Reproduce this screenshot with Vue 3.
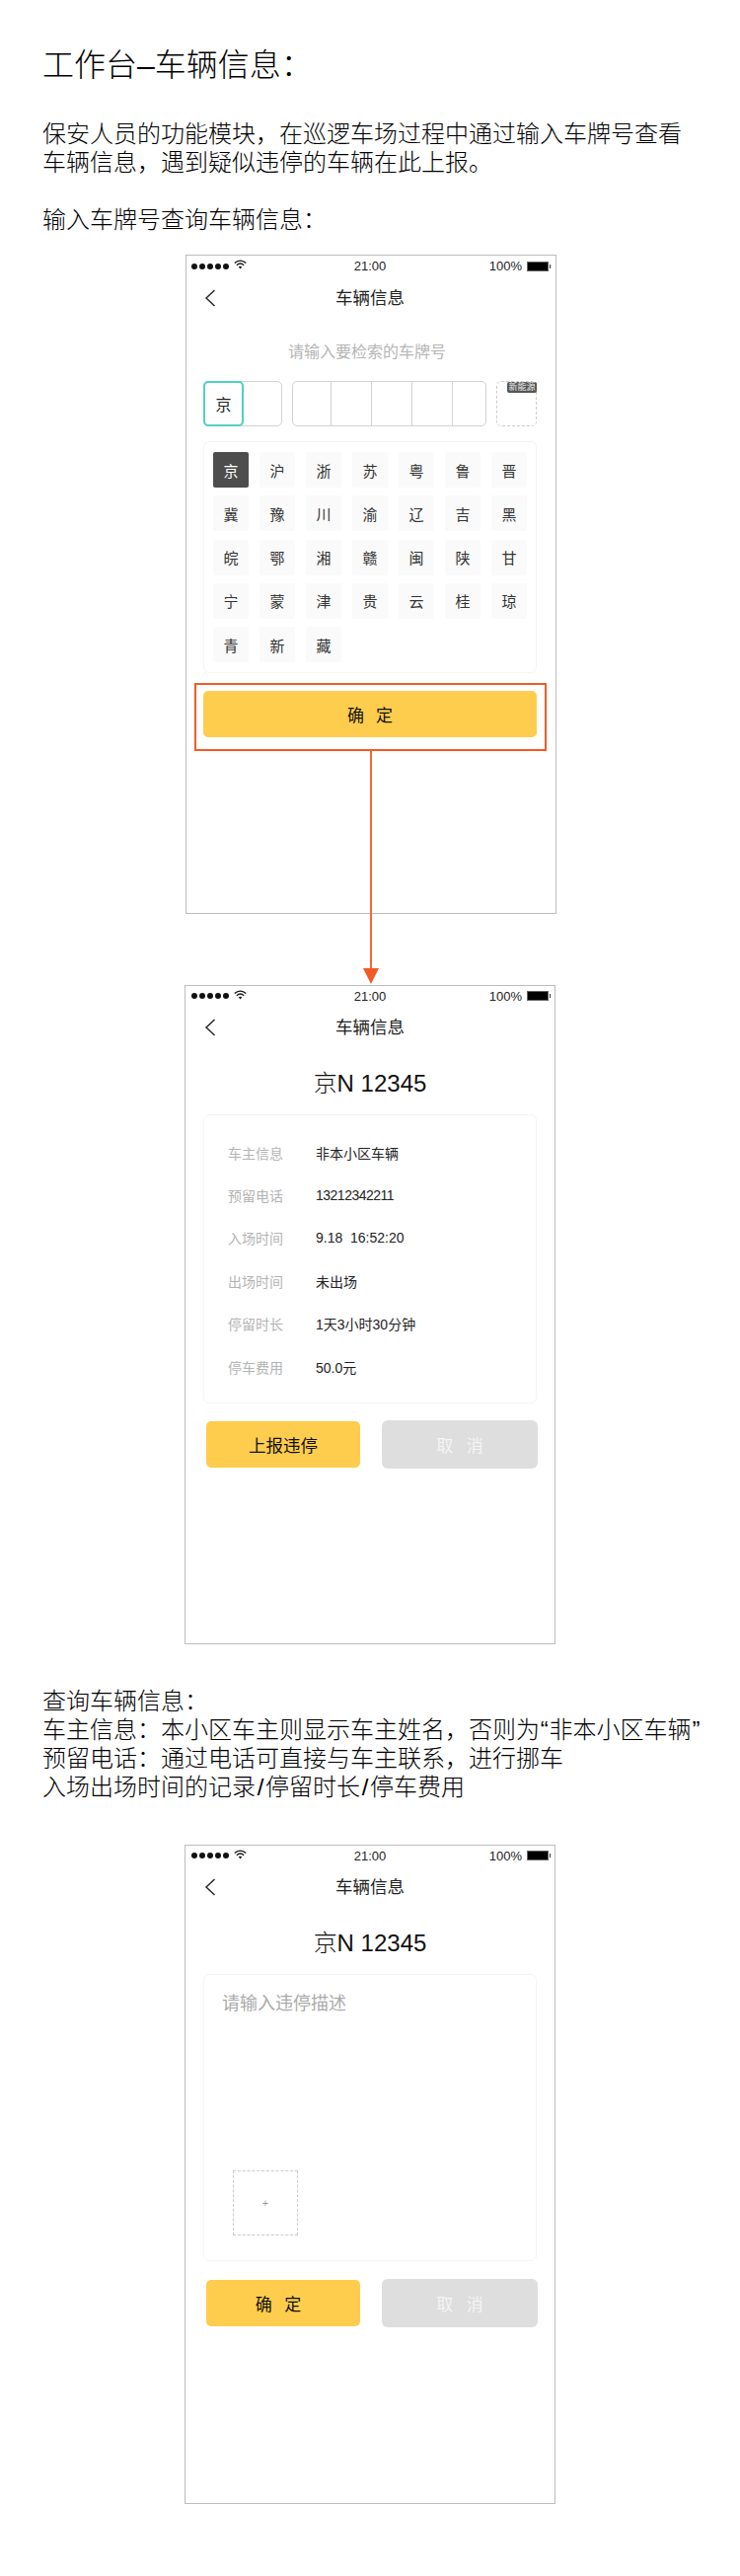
<script setup>
const provinces = ['京','沪','浙','苏','粤','鲁','晋','冀','豫','川','渝','辽','吉','黑','皖','鄂','湘','赣','闽','陕','甘','宁','蒙','津','贵','云','桂','琼','青','新','藏']
const details = [
  ['车主信息','非本小区车辆'],
  ['预留电话','13212342211'],
  ['入场时间','9.18  16:52:20'],
  ['出场时间','未出场'],
  ['停留时长','1天3小时30分钟'],
  ['停车费用','50.0元'],
]
const dots = [1,2,3,4,5]
</script>

<template>
  <div class="page">
    <h1 class="title">工作台–车辆信息：</h1>
    <p class="intro">保安人员的功能模块，在巡逻车场过程中通过输入车牌号查看<br>车辆信息，遇到疑似违停的车辆在此上报。</p>
    <h2 class="sub">输入车牌号查询车辆信息：</h2>

    <!-- screen 1 -->
    <section class="phone phone-a">
      <div class="status">
        <div class="signal">
          <i v-for="d in dots" :key="d" class="dot"></i>
          <svg class="wifi" width="13" height="10" viewBox="0 0 13 10"><path d="M.8 3.500C4.200.4 8.800.4 12.200 3.500M2.900 5.700c2.200-2 5-2 7.200 0" fill="none" stroke="#111" stroke-width="1.500"/><path d="M4.700 7.300c1.100-.9 2.500-.9 3.600 0L6.500 9.500z" fill="#111"/></svg>
        </div>
        <span class="time">21:00</span>
        <div class="power">
          <span>100%</span>
          <span class="battery"><i></i></span>
        </div>
      </div>
      <div class="nav">
        <svg class="back" width="12" height="18" viewBox="0 0 12 18"><path d="M10.500 1 2 9l8.500 8" fill="none" stroke="#222" stroke-width="1.400"/></svg>
        <span>车辆信息</span>
      </div>
      <p class="prompt">请输入要检索的车牌号</p>
      <div class="plate-row">
        <div class="plate-prov">
          <div class="plate-selected">京</div>
        </div>
        <div class="plate-cells">
          <i></i><i></i><i></i><i></i><i></i>
        </div>
        <div class="plate-new"><span class="badge">新能源</span></div>
      </div>
      <div class="keyboard">
        <span v-for="(p, i) in provinces" :key="p" class="key" :class="{ active: i === 0 }">{{ p }}</span>
      </div>
      <button class="primary wide">确&nbsp;&nbsp;定</button>

      <div class="highlight"></div>
      <div class="connector"></div>
    </section>

    <!-- screen 2 -->
    <section class="phone phone-b second">
      <div class="status">
        <div class="signal">
          <i v-for="d in dots" :key="d" class="dot"></i>
          <svg class="wifi" width="13" height="10" viewBox="0 0 13 10"><path d="M.8 3.500C4.200.4 8.800.4 12.200 3.500M2.900 5.700c2.200-2 5-2 7.200 0" fill="none" stroke="#111" stroke-width="1.500"/><path d="M4.700 7.300c1.100-.9 2.500-.9 3.600 0L6.500 9.500z" fill="#111"/></svg>
        </div>
        <span class="time">21:00</span>
        <div class="power">
          <span>100%</span>
          <span class="battery"><i></i></span>
        </div>
      </div>
      <div class="nav">
        <svg class="back" width="12" height="18" viewBox="0 0 12 18"><path d="M10.500 1 2 9l8.500 8" fill="none" stroke="#222" stroke-width="1.400"/></svg>
        <span>车辆信息</span>
      </div>
      <div class="plate-no">京N 12345</div>
      <div class="card info">
        <div v-for="(row, i) in details" :key="row[0]" class="info-row">
          <span class="info-label">{{ row[0] }}</span>
          <span class="info-value" :class="{ tight: i === 1 }">{{ row[1] }}</span>
        </div>
      </div>
      <div class="actions first">
        <button class="primary half">上报违停</button>
        <button class="muted">取&nbsp;&nbsp;消</button>
      </div>
    </section>

    <div class="notes">
      查询车辆信息：<br>
      车主信息：本小区车主则显示车主姓名，否则为<span class="quote">“</span>非本小区车辆<span class="quote">”</span><br>
      预留电话：通过电话可直接与车主联系，进行挪车<br>
      入场出场时间的记录<span class="slash">/</span>停留时长<span class="slash">/</span>停车费用
    </div>

    <!-- screen 3 -->
    <section class="phone phone-b third">
      <div class="status">
        <div class="signal">
          <i v-for="d in dots" :key="d" class="dot"></i>
          <svg class="wifi" width="13" height="10" viewBox="0 0 13 10"><path d="M.8 3.500C4.200.4 8.800.4 12.200 3.500M2.900 5.700c2.200-2 5-2 7.200 0" fill="none" stroke="#111" stroke-width="1.500"/><path d="M4.700 7.300c1.100-.9 2.500-.9 3.600 0L6.500 9.500z" fill="#111"/></svg>
        </div>
        <span class="time">21:00</span>
        <div class="power">
          <span>100%</span>
          <span class="battery"><i></i></span>
        </div>
      </div>
      <div class="nav">
        <svg class="back" width="12" height="18" viewBox="0 0 12 18"><path d="M10.500 1 2 9l8.500 8" fill="none" stroke="#222" stroke-width="1.400"/></svg>
        <span>车辆信息</span>
      </div>
      <div class="plate-no">京N 12345</div>
      <div class="card report">
        <p class="report-hint">请输入违停描述</p>
        <div class="upload">+</div>
      </div>
      <div class="actions last">
        <button class="primary half off-center">确&nbsp;&nbsp;定</button>
        <button class="muted">取&nbsp;&nbsp;消</button>
      </div>
    </section>
  </div>
</template>

<style scoped>
.page {
  width: 750px;
  height: 2610px;
  overflow: hidden;
  background: #fff;
  color: #000;
  font-family: "Liberation Sans", "Noto Sans CJK SC", sans-serif;
}
.title {
  margin: 0;
  padding: 45px 0 0 43px;
  font-size: 32px;
  line-height: 42px;
  font-weight: 300;
}
.intro {
  margin: 34px 0 0 43px;
  font-size: 24px;
  line-height: 29px;
  font-weight: 300;
  white-space: nowrap;
}
.sub {
  margin: 29px 0 0 43px;
  font-size: 24px;
  line-height: 29px;
  font-weight: 300;
}
.phone {
  position: relative;
  box-sizing: border-box;
  width: 376px;
  height: 668px;
  border: 1px solid #bdbdbd;
}
.phone-a {
  margin: 21px 0 0 188px;
  padding: 0 19px 0 17px;
}
.phone-b {
  margin-left: 187px;
  padding: 0 18px;
}
.second { margin-top: 72px; }
.third { margin-top: 44px; }
.status {
  display: grid;
  grid-template-columns: 1fr auto 1fr;
  align-items: center;
  height: 21px;
  margin: 0 -12px;
  font-size: 13px;
  color: #222;
}
.phone-b .status { height: 20px; }
.signal {
  display: flex;
  align-items: center;
  gap: 2px;
}
.dot {
  width: 6px;
  height: 6px;
  border-radius: 50%;
  background: #111;
}
.wifi { margin: -3px 0 0 3px; }
.power {
  display: flex;
  align-items: center;
  justify-content: flex-end;
  gap: 5px;
}
.battery {
  position: relative;
  box-sizing: border-box;
  width: 22px;
  height: 10px;
  border: 1px solid #666;
  background: #000;
}
.battery i {
  position: absolute;
  top: 2px;
  right: -3px;
  width: 1px;
  height: 4px;
  background: #333;
}
.nav {
  position: relative;
  display: flex;
  align-items: center;
  justify-content: center;
  box-sizing: border-box;
  height: 44px;
  padding-bottom: 3px;
  font-size: 17.500px;
  color: #222;
}
.back {
  position: absolute;
  left: 1px;
  top: 13px;
}
.prompt {
  margin: 21px 0 0;
  padding-right: 6px;
  text-align: center;
  font-size: 16px;
  line-height: 24px;
  color: #b5b5b5;
}
.plate-row {
  display: flex;
  height: 46px;
  margin-top: 17px;
}
.plate-prov {
  box-sizing: border-box;
  position: relative;
  width: 80px;
  border: 1px solid #d2d2d2;
  border-radius: 5px;
}
.plate-selected {
  position: absolute;
  left: -1px;
  top: -1px;
  bottom: -1px;
  box-sizing: border-box;
  display: flex;
  align-items: center;
  justify-content: center;
  width: 41px;
  border: 2px solid #4fd0c3;
  border-radius: 5px;
  background: #fff;
  font-size: 16px;
  color: #222;
}
.plate-cells {
  box-sizing: border-box;
  display: grid;
  grid-template-columns: 38px 41px 41px 41px 1fr;
  width: 198px;
  margin-left: 10px;
  border: 1px solid #d2d2d2;
  border-radius: 5px;
}
.plate-cells i { border-left: 1px solid #d2d2d2; }
.plate-cells i:first-child { border-left: 0; }
.plate-new {
  box-sizing: border-box;
  position: relative;
  width: 41px;
  margin-left: 10px;
  border: 1px dashed #ccc;
  border-radius: 5px;
}
.badge {
  position: absolute;
  top: 0;
  right: -1px;
  width: 30px;
  height: 11px;
  border-radius: 2px;
  background: #555;
  color: #eee;
  font-size: 9px;
  line-height: 11px;
  text-align: center;
  white-space: nowrap;
}
.keyboard {
  box-sizing: border-box;
  display: grid;
  grid-template-columns: repeat(7, 36px);
  grid-auto-rows: 36px;
  column-gap: 11px;
  row-gap: 8.250px;
  align-content: start;
  height: 235px;
  margin-top: 15px;
  padding: 10px 9px;
  border: 1px solid #f4f4f4;
  border-radius: 6px;
}
.key {
  display: flex;
  align-items: center;
  justify-content: center;
  border-radius: 2px;
  background: #fafafa;
  font-size: 15px;
  color: #333;
}
.key.active {
  background: #4d4d4d;
  color: #fff;
}
button {
  display: block;
  padding: 0;
  border: 0;
  font-family: inherit;
  cursor: pointer;
}
.primary {
  background: #ffcd4d;
  color: #111;
  border-radius: 5px;
}
.wide {
  width: 338px;
  height: 47px;
  margin-top: 18px;
  font-size: 17px;
  word-spacing: 1.300px;
}
.highlight {
  position: absolute;
  left: 8px;
  top: 433px;
  box-sizing: border-box;
  width: 357px;
  height: 69px;
  border: 2px solid #f15a24;
}
.connector {
  position: absolute;
  left: 186px;
  top: 502px;
  width: 2px;
  height: 220px;
  background: #f1683a;
}
.connector::after {
  content: "";
  position: absolute;
  left: -7px;
  bottom: -16px;
  border-left: 8px solid transparent;
  border-right: 8px solid transparent;
  border-top: 16px solid #f15a24;
}
.plate-no {
  margin-top: 18px;
  text-align: center;
  font-size: 24px;
  line-height: 34px;
  font-weight: 300;
  color: #111;
}
.card {
  box-sizing: border-box;
  width: 338px;
  margin-top: 14px;
  border: 1px solid #f4f4f4;
  border-radius: 6px;
}
.info {
  height: 293px;
  padding: 16px 0 0 24px;
}
.info-row {
  display: flex;
  align-items: center;
  height: 43.400px;
  font-size: 14px;
}
.info-label {
  width: 89px;
  color: #b3b3b3;
}
.info-value {
  color: #222;
  white-space: pre;
}
.tight { letter-spacing: -0.500px; }
.actions {
  display: flex;
  align-items: center;
  justify-content: space-between;
  width: 339px;
  padding-left: 3px;
  box-sizing: border-box;
}
.first { margin-top: 17px; }
.last { margin-top: 18px; }
.half {
  width: 156px;
  height: 47px;
  font-size: 17.500px;
}
.off-center {
  padding-right: 10px;
  font-size: 17px;
  word-spacing: 1.500px;
}
.muted {
  width: 158px;
  height: 49px;
  border-radius: 6px;
  background: #dedede;
  color: #f5f5f5;
  font-size: 17px;
  word-spacing: 2px;
}
.notes {
  margin: 43px 0 0 43px;
  font-size: 24px;
  line-height: 29px;
  font-weight: 300;
  white-space: nowrap;
}
.slash { padding: 0 1.700px; }
.quote { padding: 0 0.800px; }
.report {
  height: 291px;
  padding: 16px 0 0 18px;
}
.report-hint {
  margin: 0;
  font-size: 18px;
  line-height: 26px;
  color: #aaa;
}
.upload {
  box-sizing: border-box;
  display: flex;
  align-items: center;
  justify-content: center;
  width: 66px;
  height: 66px;
  margin: 156px 0 0 11px;
  border: 1px dashed #ccc;
  font-size: 11px;
  color: #999;
}
</style>
